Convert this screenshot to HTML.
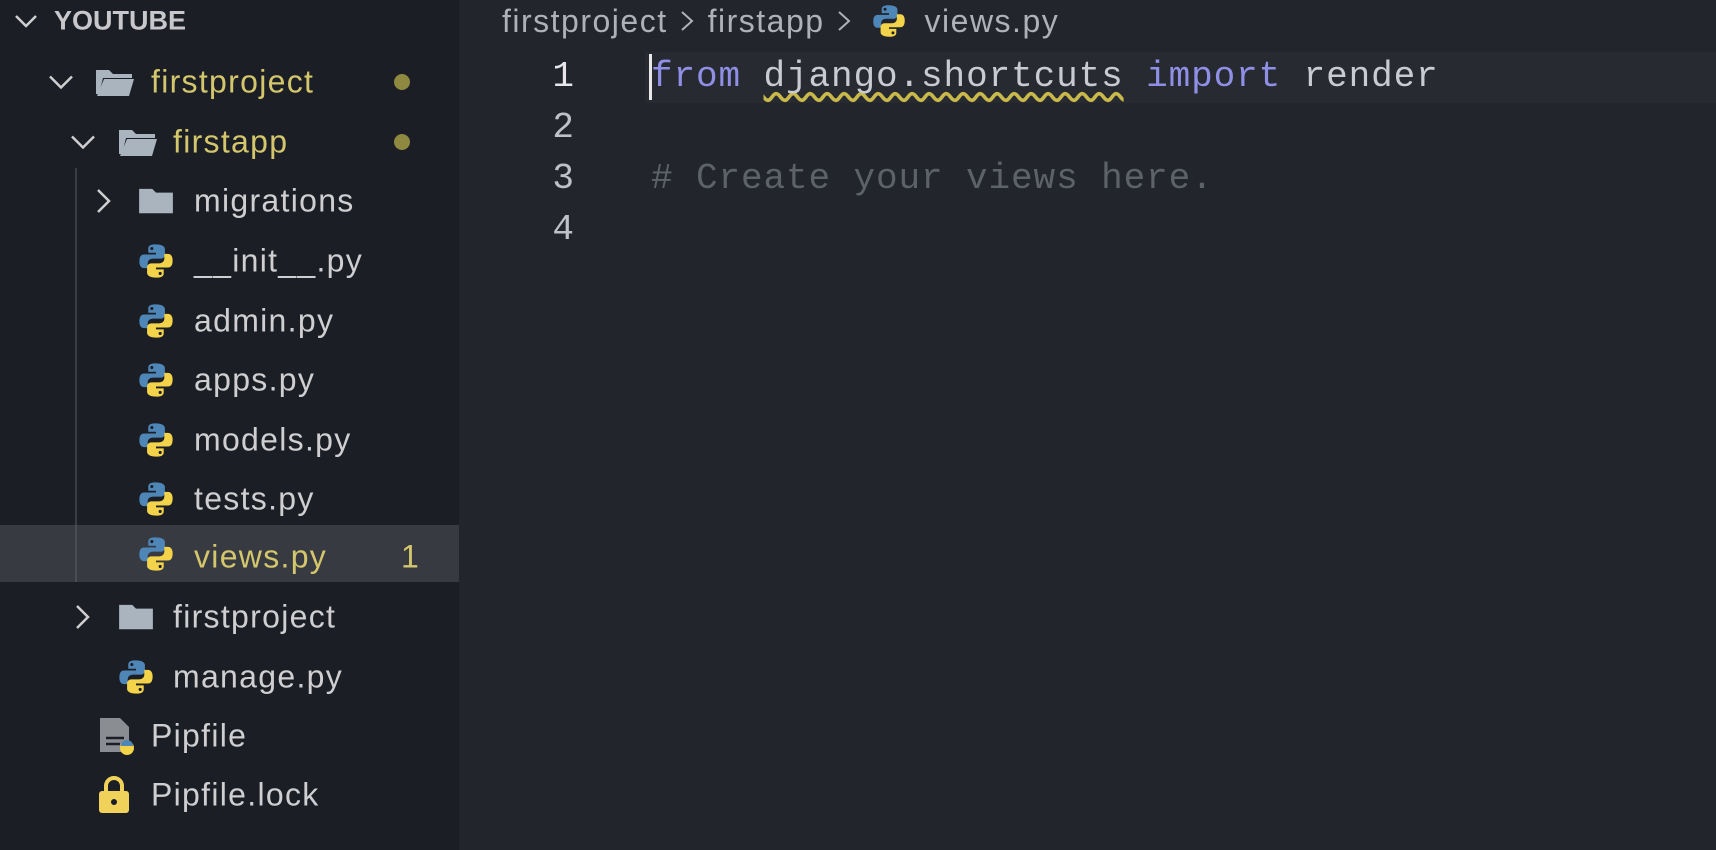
<!DOCTYPE html>
<html><head><meta charset="utf-8"><style>
body{margin:0;width:1716px;height:850px;background:#22252c;overflow:hidden;font-family:"Liberation Sans",sans-serif;position:relative}
#side{position:absolute;left:0;top:0;width:459px;height:850px;background:#1b1e24}
.row{position:absolute;left:0;width:459px;height:59px;}
.t{position:absolute;font-size:32px;letter-spacing:1.3px;color:#cfcfd2;top:50%;transform:translateY(-50%);white-space:nowrap}
.y{color:#d3c66c}
.chev{position:absolute;top:50%;transform:translateY(-50%)}
.ic{position:absolute;top:50%;transform:translateY(-50%)}
.dot{position:absolute;left:394px;top:50%;margin-top:-8px;width:16px;height:16px;border-radius:50%;background:#8e8840}
.code{position:absolute;left:651px;font-family:"Liberation Mono",monospace;font-size:36px;letter-spacing:0.9px;color:#c9cbd2;white-space:pre}
.ln{position:absolute;width:574px;left:0;text-align:right;font-family:"Liberation Mono",monospace;font-size:36px;color:#bfc1c6}
</style></head><body>
<svg width="0" height="0" style="position:absolute"><defs>
<symbol id="py" viewBox="0 0 32 32"><path d="M15.5 2c-6 0-6 2.5-6 4v3h6.5v1.5H6C3 10.5 2 13 2 16.5S3.5 22 6 22h3v-4c0-2.5 2-4 4.5-4h6.5c2 0 3.5-1.5 3.5-3.5V6c0-2-2-4-8-4z" fill="#4f86b8"/><circle cx="12.5" cy="5.5" r="1.3" fill="#1b1e24"/><path d="M16.5 30c6 0 6-2.5 6-4v-3H16v-1.5h10c3 0 4-2.5 4-6S28.5 10 26 10h-3v4c0 2.5-2 4-4.5 4H12c-2 0-3.5 1.5-3.5 3.5V26c0 2 2 4 8 4z" fill="#f3d34a"/><circle cx="19.5" cy="26.5" r="1.3" fill="#1b1e24"/></symbol>
<symbol id="fo" viewBox="0 0 40 32"><path d="M2 4h13l4 4h19v4H9L5 28H2z" fill="#aab4bf"/><path d="M10 13h30l-5 17H3z" fill="#aab4bf"/></symbol>
<symbol id="fc" viewBox="0 0 40 32"><path d="M2 3h14l4 4h18v22H2z" fill="#aab4bf"/></symbol>
</defs></svg>
<div id="side">
<div style="position:absolute;left:75px;top:168px;width:2px;height:414px;background:#3a3d44"></div>
<div class="row" style="top:-9px"><svg class="chev" style="left:14px" width="24" height="14" viewBox="0 0 24 14"><path d="M2 2l10 10 10-10" stroke="#cfcfd2" stroke-width="2.5" fill="none"/></svg><span class="t" style="left:54px;font-size:27px;font-weight:bold;letter-spacing:0;color:#c8c8cc">YOUTUBE</span></div>
<div class="row" style="top:52px"><svg class="chev" style="left:48px" width="26" height="15" viewBox="0 0 26 15"><path d="M2 2l11 11 11-11" stroke="#cfcfd2" stroke-width="2.5" fill="none"/></svg><svg class="ic" style="left:94px" width="40" height="32"><use href="#fo"/></svg><span class="t y" style="left:151px">firstproject</span><div class="dot"></div></div>
<div class="row" style="top:112px"><svg class="chev" style="left:70px" width="26" height="15" viewBox="0 0 26 15"><path d="M2 2l11 11 11-11" stroke="#cfcfd2" stroke-width="2.5" fill="none"/></svg><svg class="ic" style="left:117px" width="40" height="32"><use href="#fo"/></svg><span class="t y" style="left:173px">firstapp</span><div class="dot"></div></div>
<div class="row" style="top:171px"><svg class="chev" style="left:96px" width="15" height="26" viewBox="0 0 15 26"><path d="M2 2l11 11-11 11" stroke="#cfcfd2" stroke-width="2.5" fill="none"/></svg><svg class="ic" style="left:137px" width="38" height="30"><use href="#fc"/></svg><span class="t" style="left:194px">migrations</span></div>
<div class="row" style="top:231px"><svg class="ic" style="left:137px" width="38" height="38"><use href="#py"/></svg><span class="t" style="left:194px">__init__.py</span></div>
<div class="row" style="top:291px"><svg class="ic" style="left:137px" width="38" height="38"><use href="#py"/></svg><span class="t" style="left:194px">admin.py</span></div>
<div class="row" style="top:350px"><svg class="ic" style="left:137px" width="38" height="38"><use href="#py"/></svg><span class="t" style="left:194px">apps.py</span></div>
<div class="row" style="top:410px"><svg class="ic" style="left:137px" width="38" height="38"><use href="#py"/></svg><span class="t" style="left:194px">models.py</span></div>
<div class="row" style="top:469px"><svg class="ic" style="left:137px" width="38" height="38"><use href="#py"/></svg><span class="t" style="left:194px">tests.py</span></div>
<div class="row" style="top:525px;height:57px;background:#373a41"><div style="position:absolute;left:75px;top:0;width:2px;height:57px;background:#4a4d54"></div><svg class="ic" style="left:137px" width="38" height="38"><use href="#py"/></svg><span class="t y" style="left:194px;margin-top:3px">views.py</span><span class="t y" style="left:401px;margin-top:3px">1</span></div>
<div class="row" style="top:587px"><svg class="chev" style="left:75px" width="15" height="26" viewBox="0 0 15 26"><path d="M2 2l11 11-11 11" stroke="#cfcfd2" stroke-width="2.5" fill="none"/></svg><svg class="ic" style="left:117px" width="38" height="30"><use href="#fc"/></svg><span class="t" style="left:173px">firstproject</span></div>
<div class="row" style="top:647px"><svg class="ic" style="left:117px" width="38" height="38"><use href="#py"/></svg><span class="t" style="left:173px">manage.py</span></div>
<div class="row" style="top:706px"><svg class="ic" style="left:98px" width="38" height="40" viewBox="0 0 38 40"><path d="M2 2h20l9 9v25H2z" fill="#8a8d92"/><path d="M8 22h18M8 28h14" stroke="#1b1e24" stroke-width="2.5"/><circle cx="29" cy="32" r="7" fill="#f3d34a"/><path d="M23 30a6 6 0 0 1 12 0z" fill="#4f86b8"/></svg><span class="t" style="left:151px">Pipfile</span></div>
<div class="row" style="top:765px"><svg class="ic" style="left:98px" width="32" height="40" viewBox="0 0 32 40"><path d="M8 17v-6a8 8 0 0 1 16 0v6" stroke="#f0d25a" stroke-width="4" fill="none"/><rect x="1" y="16" width="30" height="22" rx="3" fill="#f0d25a"/><circle cx="16" cy="27" r="3" fill="#1b1e24"/></svg><span class="t" style="left:151px">Pipfile.lock</span></div>
</div>
<div style="position:absolute;left:502px;top:0;height:42px;line-height:42px;font-size:32px;letter-spacing:1.5px;color:#aeb1b7;white-space:nowrap">firstproject<svg width="22" height="30" viewBox="0 0 22 30" style="vertical-align:-4px;margin:0 10px 0 8px"><path d="M6 6l10 9-10 9" stroke="#aeb1b7" stroke-width="2" fill="none"/></svg>firstapp<svg width="22" height="30" viewBox="0 0 22 30" style="vertical-align:-4px;margin:0 16px 0 8px"><path d="M6 6l10 9-10 9" stroke="#aeb1b7" stroke-width="2" fill="none"/></svg><svg width="36" height="36" style="vertical-align:-7px;margin-right:18px"><use href="#py"/></svg>views.py</div>
<div style="position:absolute;left:645px;top:52px;width:1071px;height:51px;background:#272a31"></div>
<div style="position:absolute;left:649px;top:54px;width:3px;height:46px;background:#e8e8e8"></div>
<div class="ln" style="top:56px;color:#e6e6e8">1</div>
<div class="ln" style="top:107px">2</div>
<div class="ln" style="top:158px">3</div>
<div class="ln" style="top:209px">4</div>
<div class="code" style="top:56px"><span style="color:#8f8fe6">from</span> <span style="text-decoration:underline wavy #c9b84a;text-underline-offset:6px;text-decoration-skip-ink:none">django.shortcuts</span> <span style="color:#8f8fe6">import</span> render</div>
<div class="code" style="top:158px;color:#5d6168"># Create your views here.</div>
</body></html>
